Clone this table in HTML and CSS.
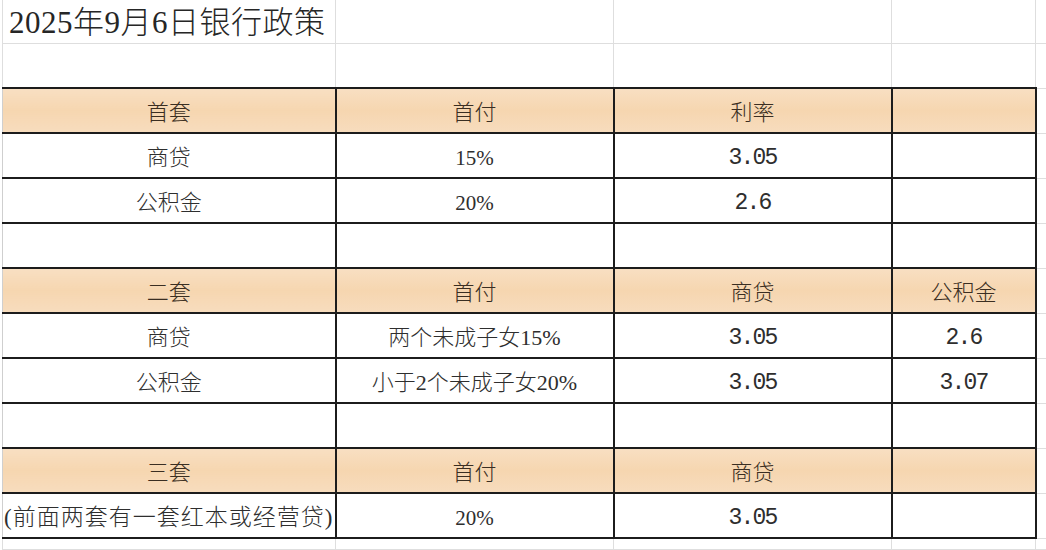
FILE: index.html
```html
<!DOCTYPE html>
<html lang="zh-CN">
<head>
<meta charset="utf-8">
<title>2025年9月6日银行政策</title>
<link rel="stylesheet" href="styles.css">
</head>
<body>
<div class="sheet">
<table class="grid">
  <colgroup>
    <col class="c1"><col class="c2"><col class="c3"><col class="c4"><col class="c5">
  </colgroup>
  <tr class="r-title">
    <td class="title">2025年9月6日银行政策</td><td></td><td></td><td></td><td></td>
  </tr>
  <tr class="r-gap">
    <td></td><td></td><td></td><td></td><td></td>
  </tr>
  <tr class="row head">
    <td class="t">首套</td><td class="t">首付</td><td class="t">利率</td><td class="t"></td><td></td>
  </tr>
  <tr class="row">
    <td class="t">商贷</td><td class="t num">15%</td><td class="t mono">3.05</td><td class="t"></td><td></td>
  </tr>
  <tr class="row">
    <td class="t">公积金</td><td class="t num">20%</td><td class="t mono">2.6</td><td class="t"></td><td></td>
  </tr>
  <tr class="row">
    <td class="t"></td><td class="t"></td><td class="t"></td><td class="t"></td><td></td>
  </tr>
  <tr class="row head">
    <td class="t">二套</td><td class="t">首付</td><td class="t">商贷</td><td class="t">公积金</td><td></td>
  </tr>
  <tr class="row">
    <td class="t">商贷</td><td class="t">两个未成子女15%</td><td class="t mono">3.05</td><td class="t mono">2.6</td><td></td>
  </tr>
  <tr class="row">
    <td class="t">公积金</td><td class="t">小于2个未成子女20%</td><td class="t mono">3.05</td><td class="t mono">3.07</td><td></td>
  </tr>
  <tr class="row">
    <td class="t"></td><td class="t"></td><td class="t"></td><td class="t"></td><td></td>
  </tr>
  <tr class="row head">
    <td class="t">三套</td><td class="t">首付</td><td class="t">商贷</td><td class="t"></td><td></td>
  </tr>
  <tr class="row">
    <td class="t note">(前面两套有一套红本或经营贷)</td><td class="t num">20%</td><td class="t mono">3.05</td><td class="t"></td><td></td>
  </tr>
  <tr class="r-last">
    <td></td><td></td><td></td><td></td><td></td>
  </tr>
</table>
</div>
</body>
</html>
```

FILE: styles.css
```css
html, body {
  margin: 0;
  padding: 0;
  background: #ffffff;
}

body {
  width: 1046px;
  height: 550px;
  overflow: hidden;
  font-family: "Liberation Serif", "Noto Sans CJK SC", serif;
  font-weight: 300;
  color: #2e2e2e;
}

.sheet {
  padding-left: 2px;
}

.grid {
  border-collapse: collapse;
  table-layout: fixed;
  width: 1073px;
}

.c1 { width: 333px; }
.c2 { width: 278px; }
.c3 { width: 278px; }
.c4 { width: 144px; }
.c5 { width: 40px; }

.grid td {
  border: 1px solid #dedede;
  padding: 5px 0 0 0;
  text-align: center;
  vertical-align: middle;
  font-size: 22px;
  line-height: 26px;
  white-space: nowrap;
  overflow: hidden;
}

.grid tr:first-child td {
  border-top: none;
}

.r-title { height: 43px; }
.r-gap { height: 45px; }
.row { height: 45px; }
.r-last { height: 11px; }

.r-last td {
  padding: 0;
  line-height: 0;
  font-size: 0;
}

.grid td.title {
  text-align: left;
  font-size: 31px;
  letter-spacing: 0.5px;
  padding: 3px 0 0 6px;
  color: #262626;
  overflow: visible;
}

.grid td.t {
  border: 2px solid #1c1c1c;
}

.grid td.t:first-child {
  border-left: 1px solid #cfcfcf;
}

.head td.t {
  background: linear-gradient(to bottom, #f8dfc2 0%, #f6d6b0 50%, #f7dcbd 100%);
  color: #3a2e22;
}

.grid td.num {
  font-size: 21px;
}

.grid td.mono {
  font-family: "Liberation Mono", monospace;
  font-size: 23px;
  letter-spacing: -1.8px;
}

.grid td.note {
  font-size: 23px;
  letter-spacing: 1px;
}
```
